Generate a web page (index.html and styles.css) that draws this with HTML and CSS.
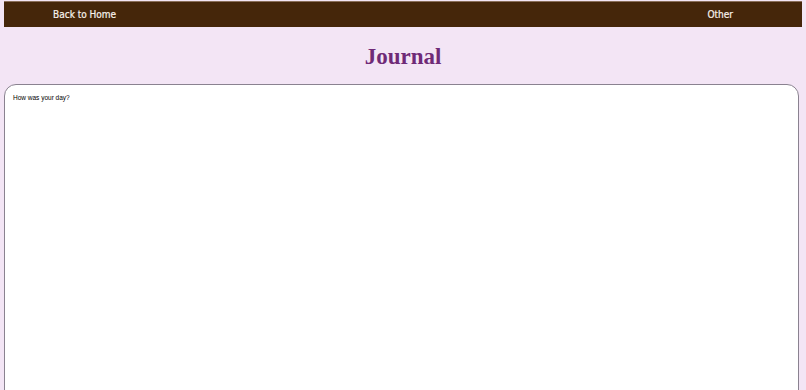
FILE: index.html
```html
<!DOCTYPE html>
<html lang="en">
<head>
    <meta charset="UTF-8">
    <meta name="viewport" content="width=device-width, initial-scale=1.0">
    <title>Journal</title>
    <link rel="stylesheet" href="styles.css">
</head>
<body>
    <nav class="navbar">
        <a href="#" class="nav-link">Back to Home</a>
        <a href="#" class="nav-link">Other</a>
    </nav>

    <h1 class="title">Journal</h1>

    <div class="entry">
        <textarea id="journalText" class="journal-input" placeholder="How was your day?"></textarea>
    </div>
</body>
</html>
```

FILE: styles.css
```css
body {
    margin: 0;
    padding: 1px 4px 0 4px;
    background-color: #f3e5f5;
    font-family: "DejaVu Sans Condensed", "DejaVu Sans", Verdana, sans-serif;
    overflow: hidden;
}
.navbar {
    display: flex;
    justify-content: space-between;
    align-items: center;
    height: 26px;
    padding: 0 69px 0 49px;
    background: #45260a;
    border-top: 1px solid #8a6f5a;
    box-sizing: border-box;
}
.nav-link {
    color: #f8f2ec;
    text-decoration: none;
    font-size: 10px;
    -webkit-text-stroke: 0.2px #f8f2ec;
}
.title {
    margin: 17px 0 0 0;
    height: 40px;
    text-align: center;
    font-family: "Liberation Serif", "Times New Roman", serif;
    font-size: 23px;
    font-weight: bold;
    color: #6f2a77;
}
.entry {
    display: flex;
}
.journal-input {
    flex: 1;
    height: 330px;
    margin: 0 3px 0 0;
    padding: 9px 8px;
    border: 1px solid #8a8290;
    border-radius: 12px;
    background: #fff;
    font-family: "Liberation Sans", Arial, sans-serif;
    font-size: 6.5px;
    resize: none;
    outline: none;
}
.journal-input::placeholder {
    color: #000;
    opacity: 1;
}
```
